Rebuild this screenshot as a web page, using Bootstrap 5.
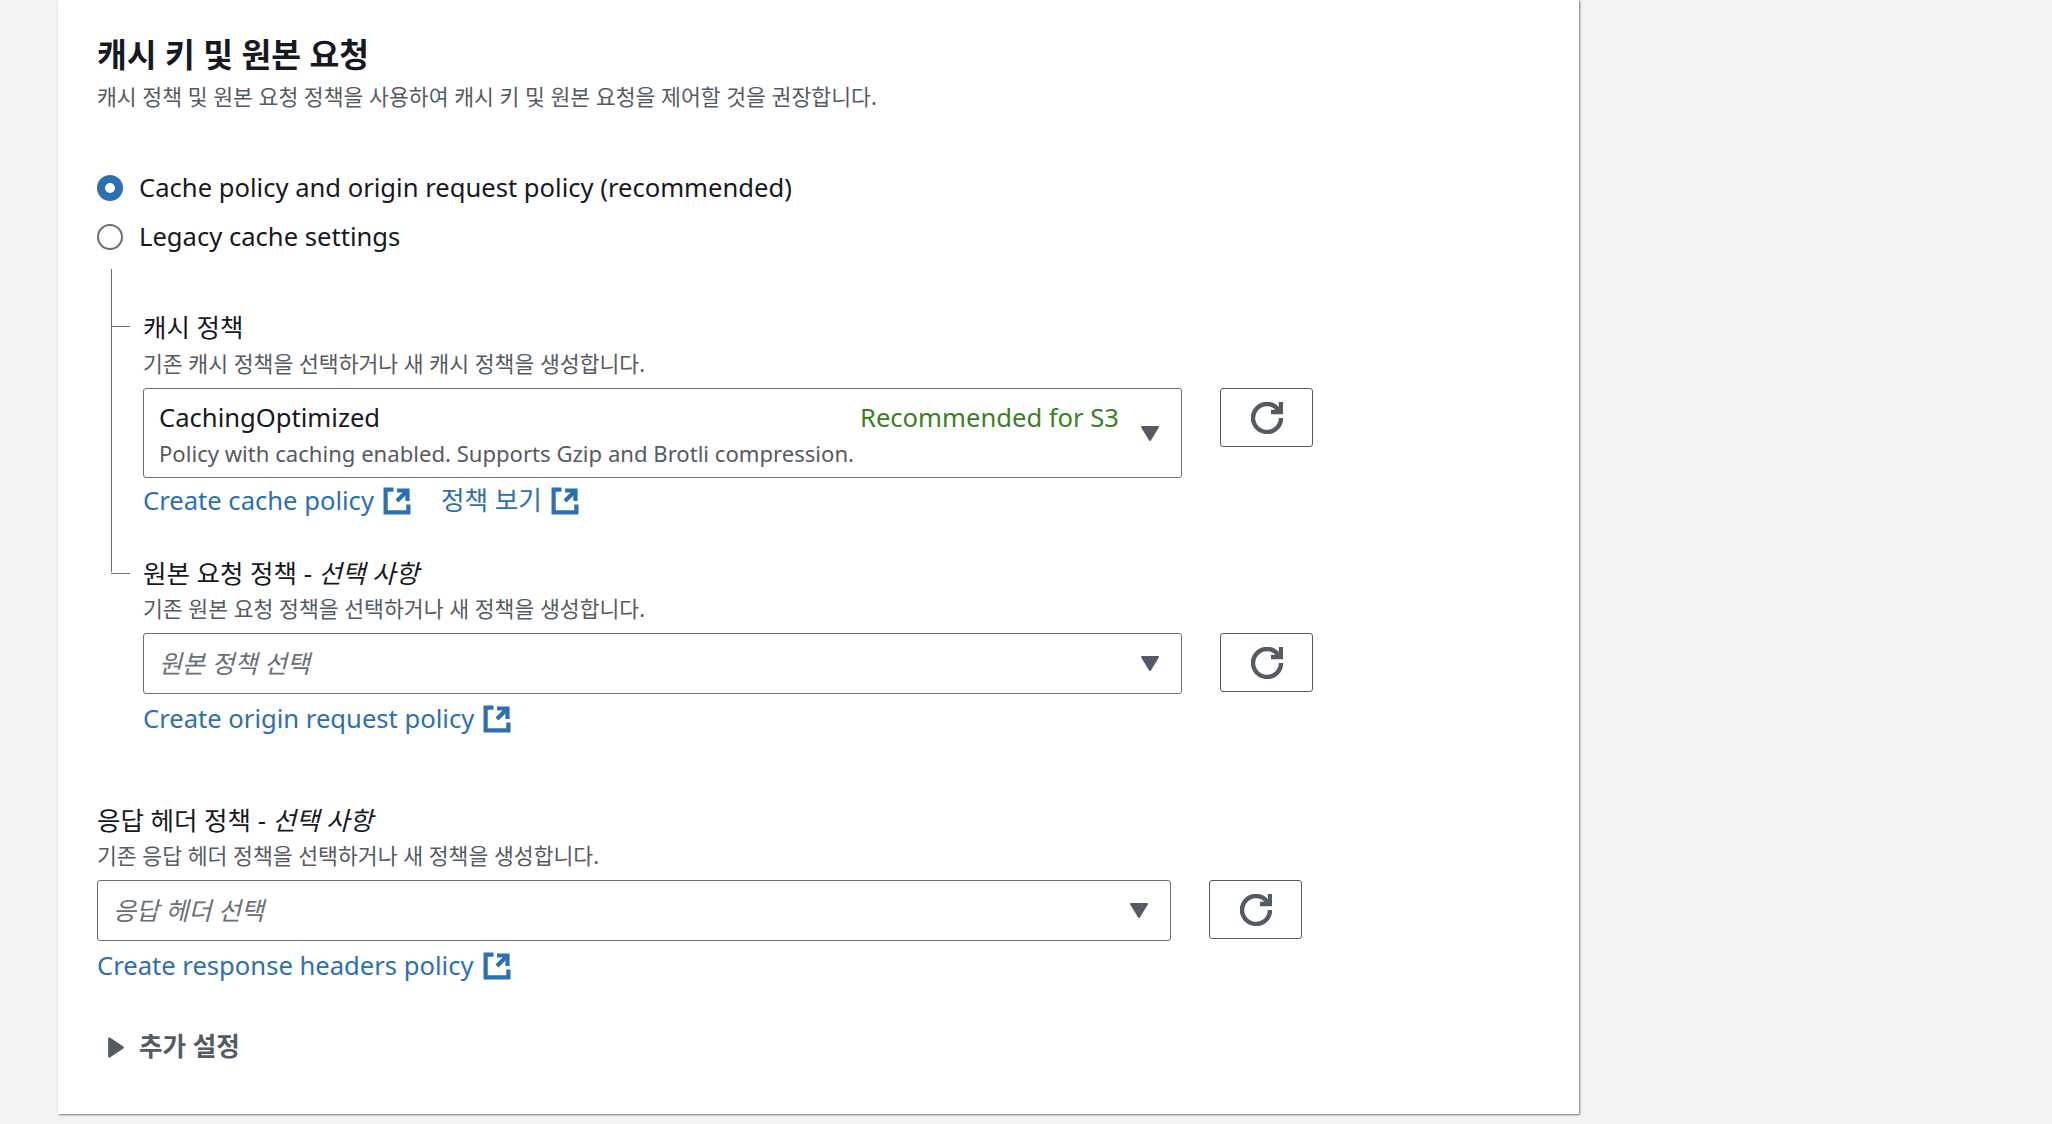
<!DOCTYPE html>
<html lang="ko">
<head>
<meta charset="utf-8">
<title>캐시 키 및 원본 요청</title>
<link href="https://cdn.jsdelivr.net/npm/bootstrap@5.3.0/dist/css/bootstrap.min.css" rel="stylesheet">
<style>
html,body{height:1124px;overflow:hidden}
body{background:#f2f3f3;color:#16191f;font-family:"Noto Sans","Noto Sans CJK KR",sans-serif;font-size:25.6px}
.sheet{width:1521px;height:1114px;margin-left:58px;background:#fff;box-shadow:1px 1px 2px rgba(0,28,36,.55);padding:36px 0 0 39px}
.sec-title{font-size:32.4px;line-height:36px;font-weight:700;margin:0;color:#16191f}
.hint{font-size:21.6px;line-height:28px;color:#545b64;margin:0}
.hint-top{margin-top:11px}
.choice{gap:16px;line-height:34px;height:34px;margin:0;padding:0;min-height:0}
.choice label{margin-top:-1px}
.choice .form-check-input{width:26px;height:26px;margin:0;float:none;border:2px solid #687078;flex:none}
.choice .form-check-input:checked{background-color:#fff;background-image:none;border:8px solid #2b6fb5}
.choice-a{margin-top:60px}
.choice-b{margin-top:15px}
.tree{position:relative;margin:15px 0 0 14px;padding:42px 0 0 32px}
.tree::before{content:"";position:absolute;left:0;top:0;width:1px;height:303px;background:#687078}
.field-label{position:relative;font-size:25.5px;line-height:32px;margin:0;color:#16191f}
.tree .field-label::before{content:"";position:absolute;left:-32px;top:16px;width:19px;height:1px;background:#687078}
.tree .first-label::before{top:15px}
.field-label+.hint{margin-top:6px}
.tree .first-label+.hint{margin-top:7px}
.pick{width:1039px;height:61px;border:1.5px solid #687078;border-radius:3px;padding:0 21px 0 15px;background:#fff}
.pick-tall{height:90px;padding-top:6px;padding-bottom:4px}
.pick-wide{width:1074px}
.pick-row{gap:38px;margin-top:10px}
.pick-text{line-height:32px}
.pick-note{font-size:22.1px;line-height:28px;color:#545b64;margin-top:5px}
.pick-ph{font-style:italic;color:#687078;font-size:25px}
.ok-tag{color:#3a7f24;margin-left:auto}
.caret-ico{width:20px;height:17px;flex:none;fill:#545b64;stroke:#545b64;stroke-width:2;stroke-linejoin:round}
.caret-gap{margin-left:21px;margin-top:-2px}
.refresh{width:93px;height:59px;padding:0;border:1.5px solid #545b64;border-radius:3px;background:#fff;flex:none}
.refresh:hover{background:#fff}
.refresh svg{width:32px;height:32px;fill:none;stroke:#545b64;stroke-width:2.2}
.links{gap:30px;line-height:32px}
.links a{color:#2b6fb5;text-decoration:none}
.ext{width:28px;height:28px;margin-left:9px;fill:none;stroke:#2b6fb5;stroke-width:2.4;vertical-align:-5px}
.gap-l1{margin-top:7px}
.gap-l2{margin-top:9px}
.gap-l3{margin-top:9px}
.second{margin-top:40px}
.third{margin-top:69px}
.more{margin-top:49px;line-height:32px;font-weight:700;color:#545b64;gap:14px;padding-left:10px}
.more svg{width:18px;height:23px;fill:#545b64;stroke:#545b64;stroke-width:2;stroke-linejoin:round}
</style>
</head>
<body>
<main class="sheet">
  <h2 class="sec-title">캐시 키 및 원본 요청</h2>
  <p class="hint hint-top">캐시 정책 및 원본 요청 정책을 사용하여 캐시 키 및 원본 요청을 제어할 것을 권장합니다.</p>

  <div class="form-check d-flex align-items-center choice choice-a">
    <input class="form-check-input" type="radio" name="cachemode" id="m1" checked>
    <label class="form-check-label" for="m1">Cache policy and origin request policy (recommended)</label>
  </div>
  <div class="form-check d-flex align-items-center choice choice-b">
    <input class="form-check-input" type="radio" name="cachemode" id="m2">
    <label class="form-check-label" for="m2">Legacy cache settings</label>
  </div>

  <div class="tree">
    <p class="field-label first-label">캐시 정책</p>
    <p class="hint">기존 캐시 정책을 선택하거나 새 캐시 정책을 생성합니다.</p>
    <div class="d-flex align-items-start pick-row">
      <div class="pick pick-tall d-flex align-items-center">
        <div class="flex-grow-1">
          <div class="d-flex pick-text"><span>CachingOptimized</span><span class="ok-tag">Recommended for S3</span></div>
          <div class="pick-note">Policy with caching enabled. Supports Gzip and Brotli compression.</div>
        </div>
        <svg class="caret-ico caret-gap" viewBox="0 0 20 17"><path d="M2 2h16L10 15z"/></svg>
      </div>
      <button class="btn refresh d-flex align-items-center justify-content-center" type="button" aria-label="새로 고침"><svg viewBox="0 0 16 16"><path d="M10 5h5V0"/><path d="M15 8a7 7 0 1 1-1.26-4.01"/></svg></button>
    </div>
    <div class="d-flex links gap-l1">
      <a href="#">Create cache policy<svg class="ext" viewBox="0 0 16 16"><path d="M14 8V2H8"/><path d="M14 2 8 8"/><path d="M6 1.5H1.5v13h13V10"/></svg></a>
      <a href="#">정책 보기<svg class="ext" viewBox="0 0 16 16"><path d="M14 8V2H8"/><path d="M14 2 8 8"/><path d="M6 1.5H1.5v13h13V10"/></svg></a>
    </div>

    <p class="field-label second">원본 요청 정책 - <i>선택 사항</i></p>
    <p class="hint">기존 원본 요청 정책을 선택하거나 새 정책을 생성합니다.</p>
    <div class="d-flex align-items-start pick-row">
      <div class="pick d-flex align-items-center justify-content-between">
        <span class="pick-ph">원본 정책 선택</span>
        <svg class="caret-ico" viewBox="0 0 20 17"><path d="M2 2h16L10 15z"/></svg>
      </div>
      <button class="btn refresh d-flex align-items-center justify-content-center" type="button" aria-label="새로 고침"><svg viewBox="0 0 16 16"><path d="M10 5h5V0"/><path d="M15 8a7 7 0 1 1-1.26-4.01"/></svg></button>
    </div>
    <div class="d-flex links gap-l2">
      <a href="#">Create origin request policy<svg class="ext" viewBox="0 0 16 16"><path d="M14 8V2H8"/><path d="M14 2 8 8"/><path d="M6 1.5H1.5v13h13V10"/></svg></a>
    </div>
  </div>

  <p class="field-label third">응답 헤더 정책 - <i>선택 사항</i></p>
  <p class="hint">기존 응답 헤더 정책을 선택하거나 새 정책을 생성합니다.</p>
  <div class="d-flex align-items-start pick-row">
    <div class="pick pick-wide d-flex align-items-center justify-content-between">
      <span class="pick-ph">응답 헤더 선택</span>
      <svg class="caret-ico" viewBox="0 0 20 17"><path d="M2 2h16L10 15z"/></svg>
    </div>
    <button class="btn refresh d-flex align-items-center justify-content-center" type="button" aria-label="새로 고침"><svg viewBox="0 0 16 16"><path d="M10 5h5V0"/><path d="M15 8a7 7 0 1 1-1.26-4.01"/></svg></button>
  </div>
  <div class="d-flex links gap-l3">
    <a href="#">Create response headers policy<svg class="ext" viewBox="0 0 16 16"><path d="M14 8V2H8"/><path d="M14 2 8 8"/><path d="M6 1.5H1.5v13h13V10"/></svg></a>
  </div>

  <div class="d-flex align-items-center more">
    <svg viewBox="0 0 16 20"><path d="M2 2 14 10 2 18z"/></svg>
    <span>추가 설정</span>
  </div>
</main>
<script src="https://cdn.jsdelivr.net/npm/bootstrap@5.3.0/dist/js/bootstrap.bundle.min.js"></script>
</body>
</html>
